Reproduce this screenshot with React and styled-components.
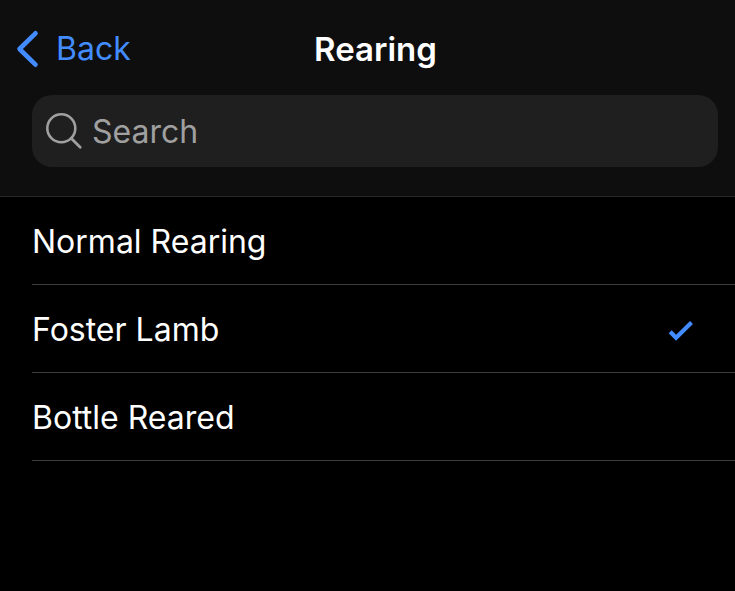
import React, {useState} from 'react';
import styled, {createGlobalStyle, ThemeProvider} from 'styled-components';

const theme = {
    colors: {
        background: '#000000',
        bar: '#0e0e0e',
        barBorder: '#272727',
        field: '#1f1f1f',
        divider: '#3d3d3f',
        text: '#ffffff',
        placeholder: '#a0a0a0',
        accent: '#438cff'
    }
};

const GlobalStyle = createGlobalStyle`
    * {
        box-sizing: border-box;
    }

    body {
        margin: 0;
        background-color: ${({theme}) => theme.colors.background};
        color: ${({theme}) => theme.colors.text};
        font-family: Inter, "Liberation Sans", sans-serif;
        font-size: 32px;
        line-height: 40px;
    }
`;

const Header = styled.header`
    padding-bottom: 29px;
    background-color: ${({theme}) => theme.colors.bar};
    border-bottom: 1px solid ${({theme}) => theme.colors.barBorder};
`;

const NavBar = styled.nav`
    display: grid;
    grid-template-columns: 1fr auto 1fr;
    align-items: center;
    padding: 29px 0 26px 16px;
`;

const BackButton = styled.button`
    display: flex;
    align-items: center;
    justify-self: start;
    gap: 16px;
    padding: 0;
    border: none;
    background: none;
    color: ${({theme}) => theme.colors.accent};
    font: inherit;
    cursor: pointer;
`;

const Title = styled.h1`
    margin: 0;
    font-size: 33px;
    font-weight: 600;
`;

const SearchField = styled.label`
    display: flex;
    align-items: center;
    gap: 9px;
    height: 72px;
    margin: 0 17px 0 32px;
    padding: 0 13px;
    border-radius: 20px;
    background-color: ${({theme}) => theme.colors.field};
    color: ${({theme}) => theme.colors.placeholder};

    svg {
        flex: none;
    }
`;

const SearchInput = styled.input`
    flex: 1;
    min-width: 0;
    padding: 2px 0 0;
    border: none;
    outline: none;
    background: none;
    color: ${({theme}) => theme.colors.text};
    font: inherit;
    appearance: none;

    &::placeholder {
        color: ${({theme}) => theme.colors.placeholder};
        opacity: 1;
    }
`;

const OptionList = styled.ul`
    margin: 0;
    padding: 0 0 0 32px;
    list-style: none;
`;

const Option = styled.li`
    border-bottom: 1px solid ${({theme}) => theme.colors.divider};
`;

const OptionLabel = styled.label`
    display: flex;
    align-items: center;
    justify-content: space-between;
    position: relative;
    height: 87px;
    padding: 2px 41px 0 0;
    cursor: pointer;
`;

const OptionRadio = styled.input`
    position: absolute;
    width: 1px;
    height: 1px;
    margin: 0;
    opacity: 0;
`;

const CheckMark = styled.span`
    display: flex;
    padding-top: 2px;
    color: ${({theme}) => theme.colors.accent};
`;

const ChevronIcon = () => (
    <svg width="24" height="38" viewBox="0 0 24 38" fill="none" aria-hidden="true">
        <path d="M19.5 3.3L3.5 19L19.5 34.7" stroke="currentColor" strokeWidth="4.6" strokeLinecap="round" strokeLinejoin="round" />
    </svg>
);

const SearchIcon = () => (
    <svg width="38" height="38" viewBox="0 0 38 38" fill="none" aria-hidden="true">
        <circle cx="16.3" cy="16.3" r="14" stroke="currentColor" strokeWidth="2.6" />
        <path d="M26.2 26.3L35.2 35.2" stroke="currentColor" strokeWidth="2.8" strokeLinecap="round" />
    </svg>
);

const CheckIcon = () => (
    <svg width="26" height="22" viewBox="0 0 26 22" fill="none" aria-hidden="true">
        <path d="M2.2 11.7L8.1 17.8L23.5 2.4" stroke="currentColor" strokeWidth="4.2" />
    </svg>
);

const options = ['Normal Rearing', 'Foster Lamb', 'Bottle Reared'];

const App = () => {

    const [search, setSearch] = useState('');
    const [selected, setSelected] = useState('Foster Lamb');

    const visible = options.filter((item) => item.toLowerCase().includes(search.toLowerCase()));

    return (
        <ThemeProvider theme={theme}>
            <GlobalStyle />

            <Header>
                <NavBar>
                    <BackButton type="button">
                        <ChevronIcon />
                        Back
                    </BackButton>
                    <Title>Rearing</Title>
                </NavBar>

                <SearchField htmlFor="search">
                    <SearchIcon />
                    <SearchInput
                        id="search"
                        type="search"
                        placeholder="Search"
                        value={search}
                        onChange={(evt) => setSearch(evt.target.value)}
                    />
                </SearchField>
            </Header>

            <OptionList>
                {visible.map((item) => (
                    <Option key={item}>
                        <OptionLabel>
                            {item}
                            <OptionRadio
                                type="radio"
                                name="rearing"
                                value={item}
                                checked={selected === item}
                                onChange={() => setSelected(item)}
                            />
                            {selected === item && <CheckMark><CheckIcon /></CheckMark>}
                        </OptionLabel>
                    </Option>
                ))}
            </OptionList>
        </ThemeProvider>
    )
}


export default App;
